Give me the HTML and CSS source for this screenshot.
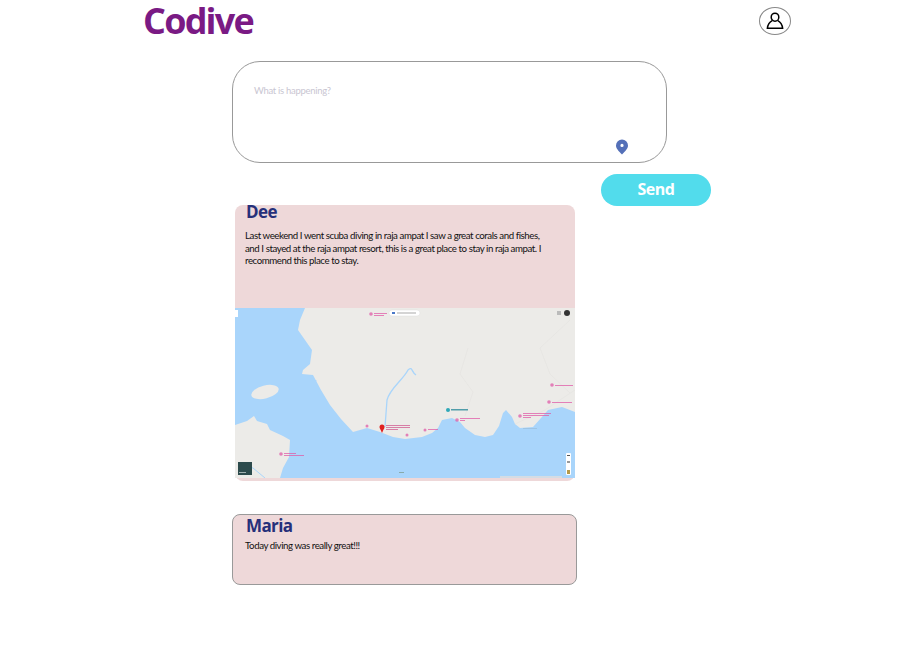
FILE: index.html
```html
<!DOCTYPE html>
<html lang="en">
<head>
    <meta charset="UTF-8">
    <meta name="viewport" content="width=device-width, initial-scale=1.0">
    <title>Codive</title>
    <link rel="stylesheet" href="styles.css">
</head>
<body>
    <header class="topbar">
        <h1 class="logo">Codive</h1>
        <button class="avatar" aria-label="Profile">
            <svg width="18" height="18" viewBox="0 0 18 18" fill="none" stroke="#000" stroke-width="1.5">
                <ellipse cx="9" cy="5.2" rx="3.8" ry="4"/>
                <path d="M6.2 8.6C3.6 10 1.8 12.6 1.4 16.2H16.6C16.2 12.6 14.4 10 11.8 8.6"/>
            </svg>
        </button>
    </header>

    <main class="feed">
        <div class="compose">
            <textarea class="compose-input" placeholder="What is happening?"></textarea>
            <svg class="pin" width="14" height="16" viewBox="0 0 14 16">
                <path fill="#5470b8" fill-rule="evenodd" d="M7 15.6C3.6 11.8 1 9.6 1 6.4a6 6 0 0 1 12 0c0 3.2-2.6 5.4-6 9.200zM7 8a1.600 1.600 0 1 0 0-3.200A1.600 1.600 0 0 0 7 8z"/>
            </svg>
        </div>
        <button class="send">Send</button>

        <article class="post post-map">
            <div class="post-body">
                <h2 class="post-name">Dee</h2>
                <p class="post-text">Last weekend I went scuba diving in raja ampat I saw a great corals and fishes, and I stayed at the raja ampat resort, this is a great place to stay in raja ampat. I recommend this place to stay.</p>
            </div>
            <svg class="map" width="340" height="170" viewBox="0 0 340 170">
                <rect width="340" height="170" fill="#a9d5fb"/>
                <!-- main land -->
                <path fill="#ecebe8" d="M70 0L65 12L63 22L70 32L77 42L75 56L68 62L67 66L78 67L86 82L95 97L106 111L118 124L125 122L132 120L145 124L158 129L170 131L187 129L197 125L203 120L207 112L217 110L225 114L230 120L240 127L250 129L258 127L264 118L268 105L271 102L277 109L280 116L285 120L298 119L306 110L313 102L327 99L340 104V0Z"/>
                <!-- lower left land -->
                <path fill="#ecebe8" d="M0 117L12 113L19 108L22 113L32 116L35 122L48 128L55 132L54 149L48 160L45 170H0Z"/>
                <ellipse cx="30" cy="84" rx="14" ry="6.500" transform="rotate(-14 30 84)" fill="#ecebe8"/>
                <!-- rivers -->
                <g fill="none" stroke="#a9d5fb" stroke-width="1">
                    <path d="M81 72L78 84L70 97"/>
                    <path d="M181 67C176 64 178 58 173 62C168 72 155 80 152 92L150 119" stroke-width="1.300"/>
                    <path d="M5 156L18 160L30 170"/>
                </g>
                <g fill="none" stroke="#e5e4e1" stroke-width=".7">
                    <path d="M233 40L225 66L238 84L230 108"/>
                    <path d="M335 12L305 40L315 66L335 85"/>
                    <path d="M280 116L310 102L340 82"/>
                </g>
                <!-- map pins and their labels -->
                <g fill="#e05ca8" opacity=".75">
                    <circle cx="136" cy="6" r="1.800"/><rect x="139" y="5" width="13" height="1"/><rect x="139" y="7" width="10" height="1"/>
                    <circle cx="132" cy="118" r="1.500"/>
                    <circle cx="172" cy="127" r="1.500"/>
                    <circle cx="190" cy="122" r="1.500"/><rect x="193" y="121" width="10" height="1"/>
                    <circle cx="222" cy="112" r="1.800"/><rect x="225" y="110" width="20" height="1"/><rect x="225" y="112" width="5" height="1"/>
                    <circle cx="285" cy="108" r="1.800"/><rect x="288" y="105" width="28" height="1"/><rect x="288" y="107" width="26" height="1"/><rect x="288" y="109" width="8" height="1"/>
                    <circle cx="317" cy="77" r="1.800"/><rect x="320" y="77" width="18" height="1"/>
                    <circle cx="314" cy="94" r="1.800"/><rect x="317" y="94" width="20" height="1"/>
                    <circle cx="46" cy="146" r="1.800"/><rect x="49" y="145" width="12" height="1"/><rect x="49" y="147" width="20" height="1"/>
                </g>
                <circle cx="147" cy="119" r="2.500" fill="#e02020"/>
                <path d="M145 120.500L147 125L149 120.500Z" fill="#e02020"/>
                <g fill="#d05a90" opacity=".75">
                    <rect x="151" y="117" width="24" height="1"/><rect x="151" y="119" width="24" height="1"/><rect x="151" y="121" width="12" height="1"/>
                </g>
                <circle cx="213" cy="102" r="2" fill="#2fa8b8"/>
                <rect x="216" y="101" width="17" height="1.500" fill="#2a8a9a" opacity=".8"/>
                <rect x="288" y="120" width="14" height="1" fill="#9ec4e4"/>
                <!-- map controls -->
                <rect x="154" y="2" width="31" height="6" rx="3" fill="#fff" stroke="#ddd" stroke-width=".5"/>
                <rect x="157" y="4" width="3" height="2" fill="#4a78c8"/>
                <rect x="162" y="4.500" width="19" height="1" fill="#aaa"/>
                <rect x="0" y="2" width="3" height="7" fill="#fff"/>
                <rect x="322" y="3" width="4" height="4" fill="#bbb"/>
                <circle cx="332" cy="5" r="3" fill="#333"/>
                <rect x="3" y="154" width="14" height="13" fill="#2c4a4c"/>
                <rect x="4" y="164" width="7" height="1" fill="#a0b0b0"/>
                <rect x="331" y="145" width="5" height="22" rx="1" fill="#fff"/>
                <rect x="332" y="147" width="3" height="1" fill="#555"/>
                <rect x="332" y="153" width="3" height="2" fill="#999"/>
                <rect x="332" y="162" width="3" height="4" fill="#b59a4a"/>
                <rect x="265" y="168" width="62" height="2" fill="#d4dce4"/>
                <rect x="164" y="164" width="5" height="1" fill="#8aa"/>
            </svg>
        </article>

        <article class="post post-plain">
            <h2 class="post-name">Maria</h2>
            <p class="post-text">Today diving was really great!!!</p>
        </article>
    </main>
</body>
</html>
```
FILE: styles.css
```css
body {
    font-family: "Lato", "Open Sans", sans-serif;
    margin: 0;
    background-color: white;
    color: #111;
}
.topbar {
    display: flex;
    justify-content: space-between;
    align-items: center;
    height: 42px;
    padding: 0 109px 0 143px;
}
.logo {
    margin: 0;
    font-family: "Open Sans", sans-serif;
    font-size: 36px;
    font-weight: 700;
    letter-spacing: -1.8px;
    line-height: 42px;
    color: #7a1a84;
}
.avatar {
    display: flex;
    align-items: center;
    justify-content: center;
    width: 32px;
    height: 28px;
    padding: 0;
    border: 1px solid #888;
    border-radius: 50%;
    background-color: white;
}
.feed {
    padding: 19px 0 0 232px;
}
.compose {
    position: relative;
    width: 435px;
    height: 102px;
}
.compose-input {
    display: block;
    box-sizing: border-box;
    width: 100%;
    height: 100%;
    padding: 23px 21px;
    border: 1px solid #999;
    border-radius: 28px;
    font-family: inherit;
    font-size: 9.500px;
    letter-spacing: -0.3px;
    resize: none;
    outline: none;
}
.compose-input::placeholder {
    color: #c9c6d2;
}
.pin {
    position: absolute;
    right: 38px;
    bottom: 8px;
}
.send {
    display: block;
    width: 110px;
    height: 32px;
    margin: 11px 0 -1px 369px;
    padding: 0 0 3px;
    border: none;
    border-radius: 16px;
    background-color: #52dcec;
    color: white;
    font-family: "Open Sans", sans-serif;
    font-size: 16px;
    font-weight: 700;
    letter-spacing: -0.5px;
}
.post {
    box-sizing: border-box;
    border-radius: 8px;
    background-color: #eed8d9;
}
.post-map {
    width: 340px;
    height: 276px;
    margin-left: 3px;
}
.post-body {
    height: 103px;
    padding: 0 25px 0 10px;
}
.post-plain {
    width: 345px;
    height: 71px;
    margin-top: 33px;
    padding: 0 12px;
    border: 1px solid #999;
}
.post-name {
    margin: 0 0 0 1px;
    font-family: "Open Sans", sans-serif;
    font-size: 17px;
    font-weight: 700;
    line-height: 14px;
    letter-spacing: -0.6px;
    color: #26307a;
}
.post-map .post-name {
    padding-bottom: 10px;
}
.post-plain .post-name {
    padding-top: 1px;
    line-height: 20px;
}
.post-text {
    margin: 0;
    font-size: 9.700px;
    line-height: 12.500px;
    letter-spacing: -0.44px;
}
.post-plain .post-text {
    margin-top: 3px;
}
.map {
    display: block;
}
```
